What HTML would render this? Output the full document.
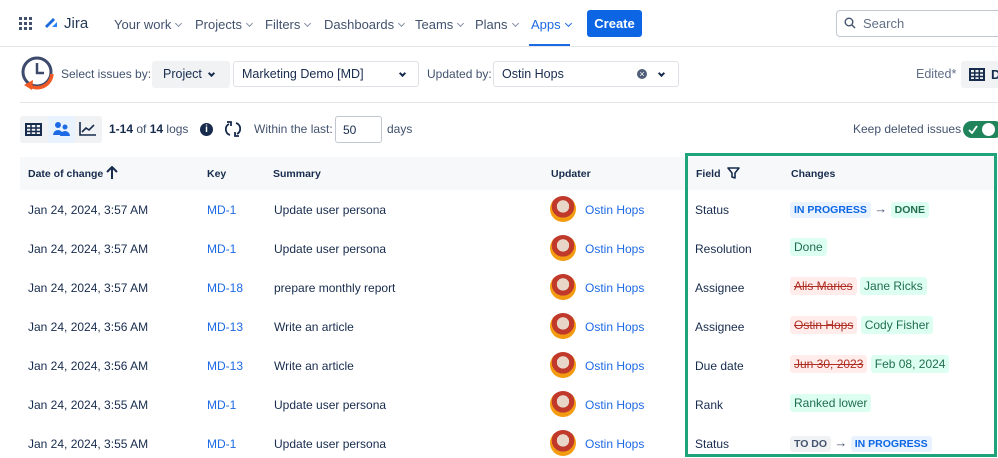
<!DOCTYPE html>
<html><head><meta charset="utf-8"><style>
*{box-sizing:border-box;margin:0;padding:0}
body{width:998px;height:458px;overflow:hidden;background:#fff;font-family:"Liberation Sans",Arial,sans-serif;color:#172b4d;position:relative;font-size:12px}
.a{position:absolute;white-space:nowrap}
.nav{font-size:13px;color:#42526e}
.chev{display:inline-block;width:5px;height:5px;border-right:1.3px solid #8590a2;border-bottom:1.3px solid #8590a2;transform:rotate(45deg);margin-left:5px;position:relative;top:-3px}
.dchev{display:inline-block;width:5px;height:5px;border-right:2px solid #172b4d;border-bottom:2px solid #172b4d;transform:rotate(45deg);position:relative;top:-3px}
.sel{border:1px solid #dfe1e6;border-radius:3px;height:26px}
.hd{font-size:10.5px;font-weight:bold;color:#172b4d}
.cell{font-size:12px;color:#172b4d}
.lnk{color:#1d6ae5;font-size:12px}
.av{width:26px;height:26px;border-radius:50%;background:radial-gradient(circle at 50% 40%,#e8d6c8 0 30%,#c0392b 31% 55%,#f39c12 56%);position:absolute}
.lz{padding:2px 4px;border-radius:3px;font-size:12px}
.tag{padding:2px 4px;border-radius:3px;font-size:10.5px;font-weight:bold}
.arr{color:#44546f;font-size:13px}
</style></head><body>
<div class="a" style="left:19px;top:17px;width:13px;height:13px;display:grid;grid-template-columns:repeat(3,3px);gap:2px">
<i style="background:#42526e"></i><i style="background:#42526e"></i><i style="background:#42526e"></i><i style="background:#42526e"></i><i style="background:#42526e"></i><i style="background:#42526e"></i><i style="background:#42526e"></i><i style="background:#42526e"></i><i style="background:#42526e"></i></div>
<svg class="a" style="left:44px;top:15px" width="16" height="16" viewBox="0 0 16 16"><path d="M4 8l5-5 2 2-5 5z" fill="#1868db"/><path d="M8 12l5-5v5z" fill="#2684ff"/><path d="M1 11l3-3 2 2-3 3z" fill="#1868db"/></svg>
<div class="a" style="left:64px;top:15px;font-size:15px;color:#253858">Jira</div>
<div class="a nav" style="left:114px;top:17px">Your work<span class="chev"></span></div>
<div class="a nav" style="left:195px;top:17px">Projects<span class="chev"></span></div>
<div class="a nav" style="left:265px;top:17px">Filters<span class="chev"></span></div>
<div class="a nav" style="left:324px;top:17px">Dashboards<span class="chev"></span></div>
<div class="a nav" style="left:415px;top:17px">Teams<span class="chev"></span></div>
<div class="a nav" style="left:475px;top:17px">Plans<span class="chev"></span></div>
<div class="a nav" style="left:531px;top:17px;color:#1d6ae5">Apps<span class="chev" style="border-color:#1d6ae5"></span></div>
<div class="a" style="left:529px;top:44px;width:41px;height:3px;background:#1d6ae5"></div>
<div class="a" style="left:587px;top:10px;width:55px;height:27px;background:#0c66e4;border-radius:3px;color:#fff;font-weight:bold;font-size:13px;text-align:center;line-height:27px">Create</div>
<div class="a" style="left:836px;top:10px;width:170px;height:27px;border:1px solid #c1c7d0;border-radius:4px"></div>
<svg class="a" style="left:844px;top:17px" width="12" height="12" viewBox="0 0 12 12"><circle cx="5" cy="5" r="3.8" stroke="#42526e" stroke-width="1.4" fill="none"/><path d="M8 8l3 3" stroke="#42526e" stroke-width="1.4"/></svg>
<div class="a" style="left:863px;top:16px;font-size:13px;color:#626f86">Search</div>
<div class="a" style="left:0;top:46px;width:998px;height:1px;background:#e4e6ea"></div>
<svg class="a" style="left:20px;top:54px" width="36" height="42" viewBox="0 0 36 42"><circle cx="17" cy="18" r="14" stroke="#3d4a6b" stroke-width="3" fill="none"/><path d="M17 9v10h7" stroke="#3d4a6b" stroke-width="2.5" fill="none"/><path d="M32 20a15 15 0 0 1-22 12" stroke="#f15a24" stroke-width="3.5" fill="none"/><path d="M4 31l9-5-1 10z" fill="#f15a24"/></svg>
<div class="a" style="left:61px;top:67px;font-size:12px;color:#42526e">Select issues by:</div>
<div class="a" style="left:152px;top:61px;width:78px;height:27px;background:#f1f2f4;border-radius:3px"></div>
<div class="a" style="left:163px;top:67px;font-size:12.5px">Project</div>
<div class="a" style="left:209px;top:68px"><span class="dchev"></span></div>
<div class="a sel" style="left:233px;top:61px;width:186px"></div>
<div class="a" style="left:242px;top:67px;font-size:12.5px">Marketing Demo [MD]</div>
<div class="a" style="left:400px;top:68px"><span class="dchev"></span></div>
<div class="a" style="left:427px;top:67px;font-size:12px;color:#42526e">Updated by:</div>
<div class="a sel" style="left:493px;top:61px;width:186px"></div>
<div class="a" style="left:502px;top:67px;font-size:12.5px">Ostin Hops</div>
<div class="a" style="left:637px;top:69px;width:10px;height:10px;border-radius:50%;background:#505f79;color:#fff;font-size:9px;line-height:10px;text-align:center">×</div>
<div class="a" style="left:659px;top:68px"><span class="dchev"></span></div>
<div class="a" style="left:916px;top:67px;font-size:12.5px;color:#626f86">Edited*</div>
<div class="a" style="left:961px;top:61px;width:40px;height:27px;background:#f1f2f4;border-radius:3px"></div>
<svg class="a" style="left:969px;top:68px" width="16" height="13" viewBox="0 0 16 13"><rect x="1" y="1" width="14" height="11" fill="none" stroke="#172b4d" stroke-width="2"/><path d="M1 5h14M1 8.5h14M5.7 1v11M10.3 1v11" stroke="#172b4d" stroke-width="1.5"/></svg>
<div class="a" style="left:991px;top:67px;font-size:13px;font-weight:bold">D</div>
<div class="a" style="left:20px;top:102px;width:978px;height:1px;background:#e4e6ea"></div>
<div class="a" style="left:20px;top:116px;width:82px;height:27px;background:#f1f2f4;border-radius:3px"></div>
<div class="a" style="left:48px;top:116px;width:27px;height:27px;background:#e9f2ff"></div>
<svg class="a" style="left:25px;top:123px" width="17" height="13" viewBox="0 0 17 13"><rect x="1" y="1" width="15" height="11" fill="none" stroke="#172b4d" stroke-width="2"/><path d="M1 5h15M1 8.5h15M6 1v11M11 1v11" stroke="#172b4d" stroke-width="1.5"/></svg>
<svg class="a" style="left:53px;top:121px" width="17" height="16" viewBox="0 0 17 16"><circle cx="5" cy="4" r="3" fill="#1d6ae5"/><circle cx="12" cy="6" r="2.5" fill="#1d6ae5"/><path d="M0 14a5 5 0 0 1 10 0z" fill="#1d6ae5"/><path d="M7 15a5 5 0 0 1 10 0z" fill="#1d6ae5"/></svg>
<svg class="a" style="left:79px;top:122px" width="18" height="14" viewBox="0 0 18 14"><path d="M1 0v13h16" stroke="#172b4d" stroke-width="1.6" fill="none"/><path d="M3 10l4-4 3 2 5-5" stroke="#172b4d" stroke-width="1.6" fill="none"/></svg>
<div class="a" style="left:109px;top:122px;font-size:12px;color:#42526e"><b style="color:#172b4d">1-14</b> of <b style="color:#172b4d">14</b> logs</div>
<div class="a" style="left:200px;top:123px;width:13px;height:13px;border-radius:50%;background:#172b4d;color:#fff;font-size:10px;font-weight:bold;text-align:center;line-height:13px">i</div>
<svg class="a" style="left:225px;top:121px" width="16" height="16" viewBox="0 0 16 16"><path d="M4 3a6 6 0 0 0 1 11M12 13a6 6 0 0 0-1-11" stroke="#172b4d" stroke-width="1.8" fill="none"/><path d="M2 1h4v4M14 15h-4v-4" stroke="#172b4d" stroke-width="1.8" fill="none"/></svg>
<div class="a" style="left:254px;top:122px;font-size:12px;color:#42526e">Within the last:</div>
<div class="a sel" style="left:335px;top:116px;width:47px;height:27px;border-color:#c1c7d0"></div>
<div class="a" style="left:343px;top:123px;font-size:12px">50</div>
<div class="a" style="left:387px;top:122px;font-size:12px;color:#42526e">days</div>
<div class="a" style="left:853px;top:122px;font-size:12px;color:#42526e">Keep deleted issues</div>
<div class="a" style="left:963px;top:121px;width:40px;height:17px;border-radius:9px;background:#1f845a"></div>
<svg class="a" style="left:968px;top:125px" width="10" height="9" viewBox="0 0 10 9"><path d="M1 5l3 3 5-7" stroke="#fff" stroke-width="1.8" fill="none"/></svg>
<div class="a" style="left:982px;top:123px;width:13px;height:13px;border-radius:50%;background:#fff"></div>
<div class="a" style="left:20px;top:157px;width:978px;height:33px;background:#f7f8f9"></div>
<div class="a hd" style="left:28px;top:168px">Date of change</div>
<svg class="a" style="left:106px;top:166px" width="12" height="13" viewBox="0 0 12 13"><path d="M6 13V2M1 6l5-5 5 5" stroke="#172b4d" stroke-width="2" fill="none"/></svg>
<div class="a hd" style="left:207px;top:168px">Key</div>
<div class="a hd" style="left:273px;top:168px">Summary</div>
<div class="a hd" style="left:551px;top:168px">Updater</div>
<div class="a hd" style="left:696px;top:168px">Field</div>
<svg class="a" style="left:727px;top:167px" width="13" height="12" viewBox="0 0 13 12"><path d="M1 1h11L8 6v5L5 10V6z" stroke="#172b4d" stroke-width="1.6" fill="none" stroke-linejoin="round"/></svg>
<div class="a hd" style="left:791px;top:168px">Changes</div>

<div class="a cell" style="left:28px;top:203px">Jan 24, 2024, 3:57 AM</div><div class="a lnk" style="left:207px;top:203px">MD-1</div><div class="a cell" style="left:274px;top:203px">Update user persona</div><div class="av" style="left:550px;top:196px"></div><div class="a lnk" style="left:585px;top:203px">Ostin Hops</div><div class="a cell" style="left:695px;top:203px">Status</div>
<div class="a" style="left:790px;top:201px"><span class="tag" style="background:#e9f2ff;color:#0c66e4">IN PROGRESS</span> <span class="arr">→</span> <span class="tag" style="background:#dcfff1;color:#216e4e">DONE</span></div>

<div class="a cell" style="left:28px;top:242px">Jan 24, 2024, 3:57 AM</div><div class="a lnk" style="left:207px;top:242px">MD-1</div><div class="a cell" style="left:274px;top:242px">Update user persona</div><div class="av" style="left:550px;top:235px"></div><div class="a lnk" style="left:585px;top:242px">Ostin Hops</div><div class="a cell" style="left:695px;top:242px">Resolution</div>
<div class="a" style="left:790px;top:240px"><span class="lz" style="background:#dcfff1;color:#216e4e">Done</span></div>

<div class="a cell" style="left:28px;top:281px">Jan 24, 2024, 3:57 AM</div><div class="a lnk" style="left:207px;top:281px">MD-18</div><div class="a cell" style="left:274px;top:281px">prepare monthly report</div><div class="av" style="left:550px;top:274px"></div><div class="a lnk" style="left:585px;top:281px">Ostin Hops</div><div class="a cell" style="left:695px;top:281px">Assignee</div>
<div class="a" style="left:790px;top:279px"><span class="lz" style="background:#ffeceb;color:#ae2e24;text-decoration:line-through">Alis Maries</span> <span class="lz" style="background:#dcfff1;color:#216e4e">Jane Ricks</span></div>

<div class="a cell" style="left:28px;top:320px">Jan 24, 2024, 3:56 AM</div><div class="a lnk" style="left:207px;top:320px">MD-13</div><div class="a cell" style="left:274px;top:320px">Write an article</div><div class="av" style="left:550px;top:313px"></div><div class="a lnk" style="left:585px;top:320px">Ostin Hops</div><div class="a cell" style="left:695px;top:320px">Assignee</div>
<div class="a" style="left:790px;top:318px"><span class="lz" style="background:#ffeceb;color:#ae2e24;text-decoration:line-through">Ostin Hops</span> <span class="lz" style="background:#dcfff1;color:#216e4e">Cody Fisher</span></div>

<div class="a cell" style="left:28px;top:359px">Jan 24, 2024, 3:56 AM</div><div class="a lnk" style="left:207px;top:359px">MD-13</div><div class="a cell" style="left:274px;top:359px">Write an article</div><div class="av" style="left:550px;top:352px"></div><div class="a lnk" style="left:585px;top:359px">Ostin Hops</div><div class="a cell" style="left:695px;top:359px">Due date</div>
<div class="a" style="left:790px;top:357px"><span class="lz" style="background:#ffeceb;color:#ae2e24;text-decoration:line-through">Jun 30, 2023</span> <span class="lz" style="background:#dcfff1;color:#216e4e">Feb 08, 2024</span></div>

<div class="a cell" style="left:28px;top:398px">Jan 24, 2024, 3:55 AM</div><div class="a lnk" style="left:207px;top:398px">MD-1</div><div class="a cell" style="left:274px;top:398px">Update user persona</div><div class="av" style="left:550px;top:391px"></div><div class="a lnk" style="left:585px;top:398px">Ostin Hops</div><div class="a cell" style="left:695px;top:398px">Rank</div>
<div class="a" style="left:790px;top:396px"><span class="lz" style="background:#dcfff1;color:#216e4e">Ranked lower</span></div>

<div class="a cell" style="left:28px;top:437px">Jan 24, 2024, 3:55 AM</div><div class="a lnk" style="left:207px;top:437px">MD-1</div><div class="a cell" style="left:274px;top:437px">Update user persona</div><div class="av" style="left:550px;top:430px"></div><div class="a lnk" style="left:585px;top:437px">Ostin Hops</div><div class="a cell" style="left:695px;top:437px">Status</div>
<div class="a" style="left:790px;top:435px"><span class="tag" style="background:#f1f2f4;color:#44546f">TO DO</span> <span class="arr">→</span> <span class="tag" style="background:#e9f2ff;color:#0c66e4">IN PROGRESS</span></div>

<div class="a" style="left:685px;top:153px;width:312px;height:304px;border:3px solid #1fa37a"></div>
</body></html>
